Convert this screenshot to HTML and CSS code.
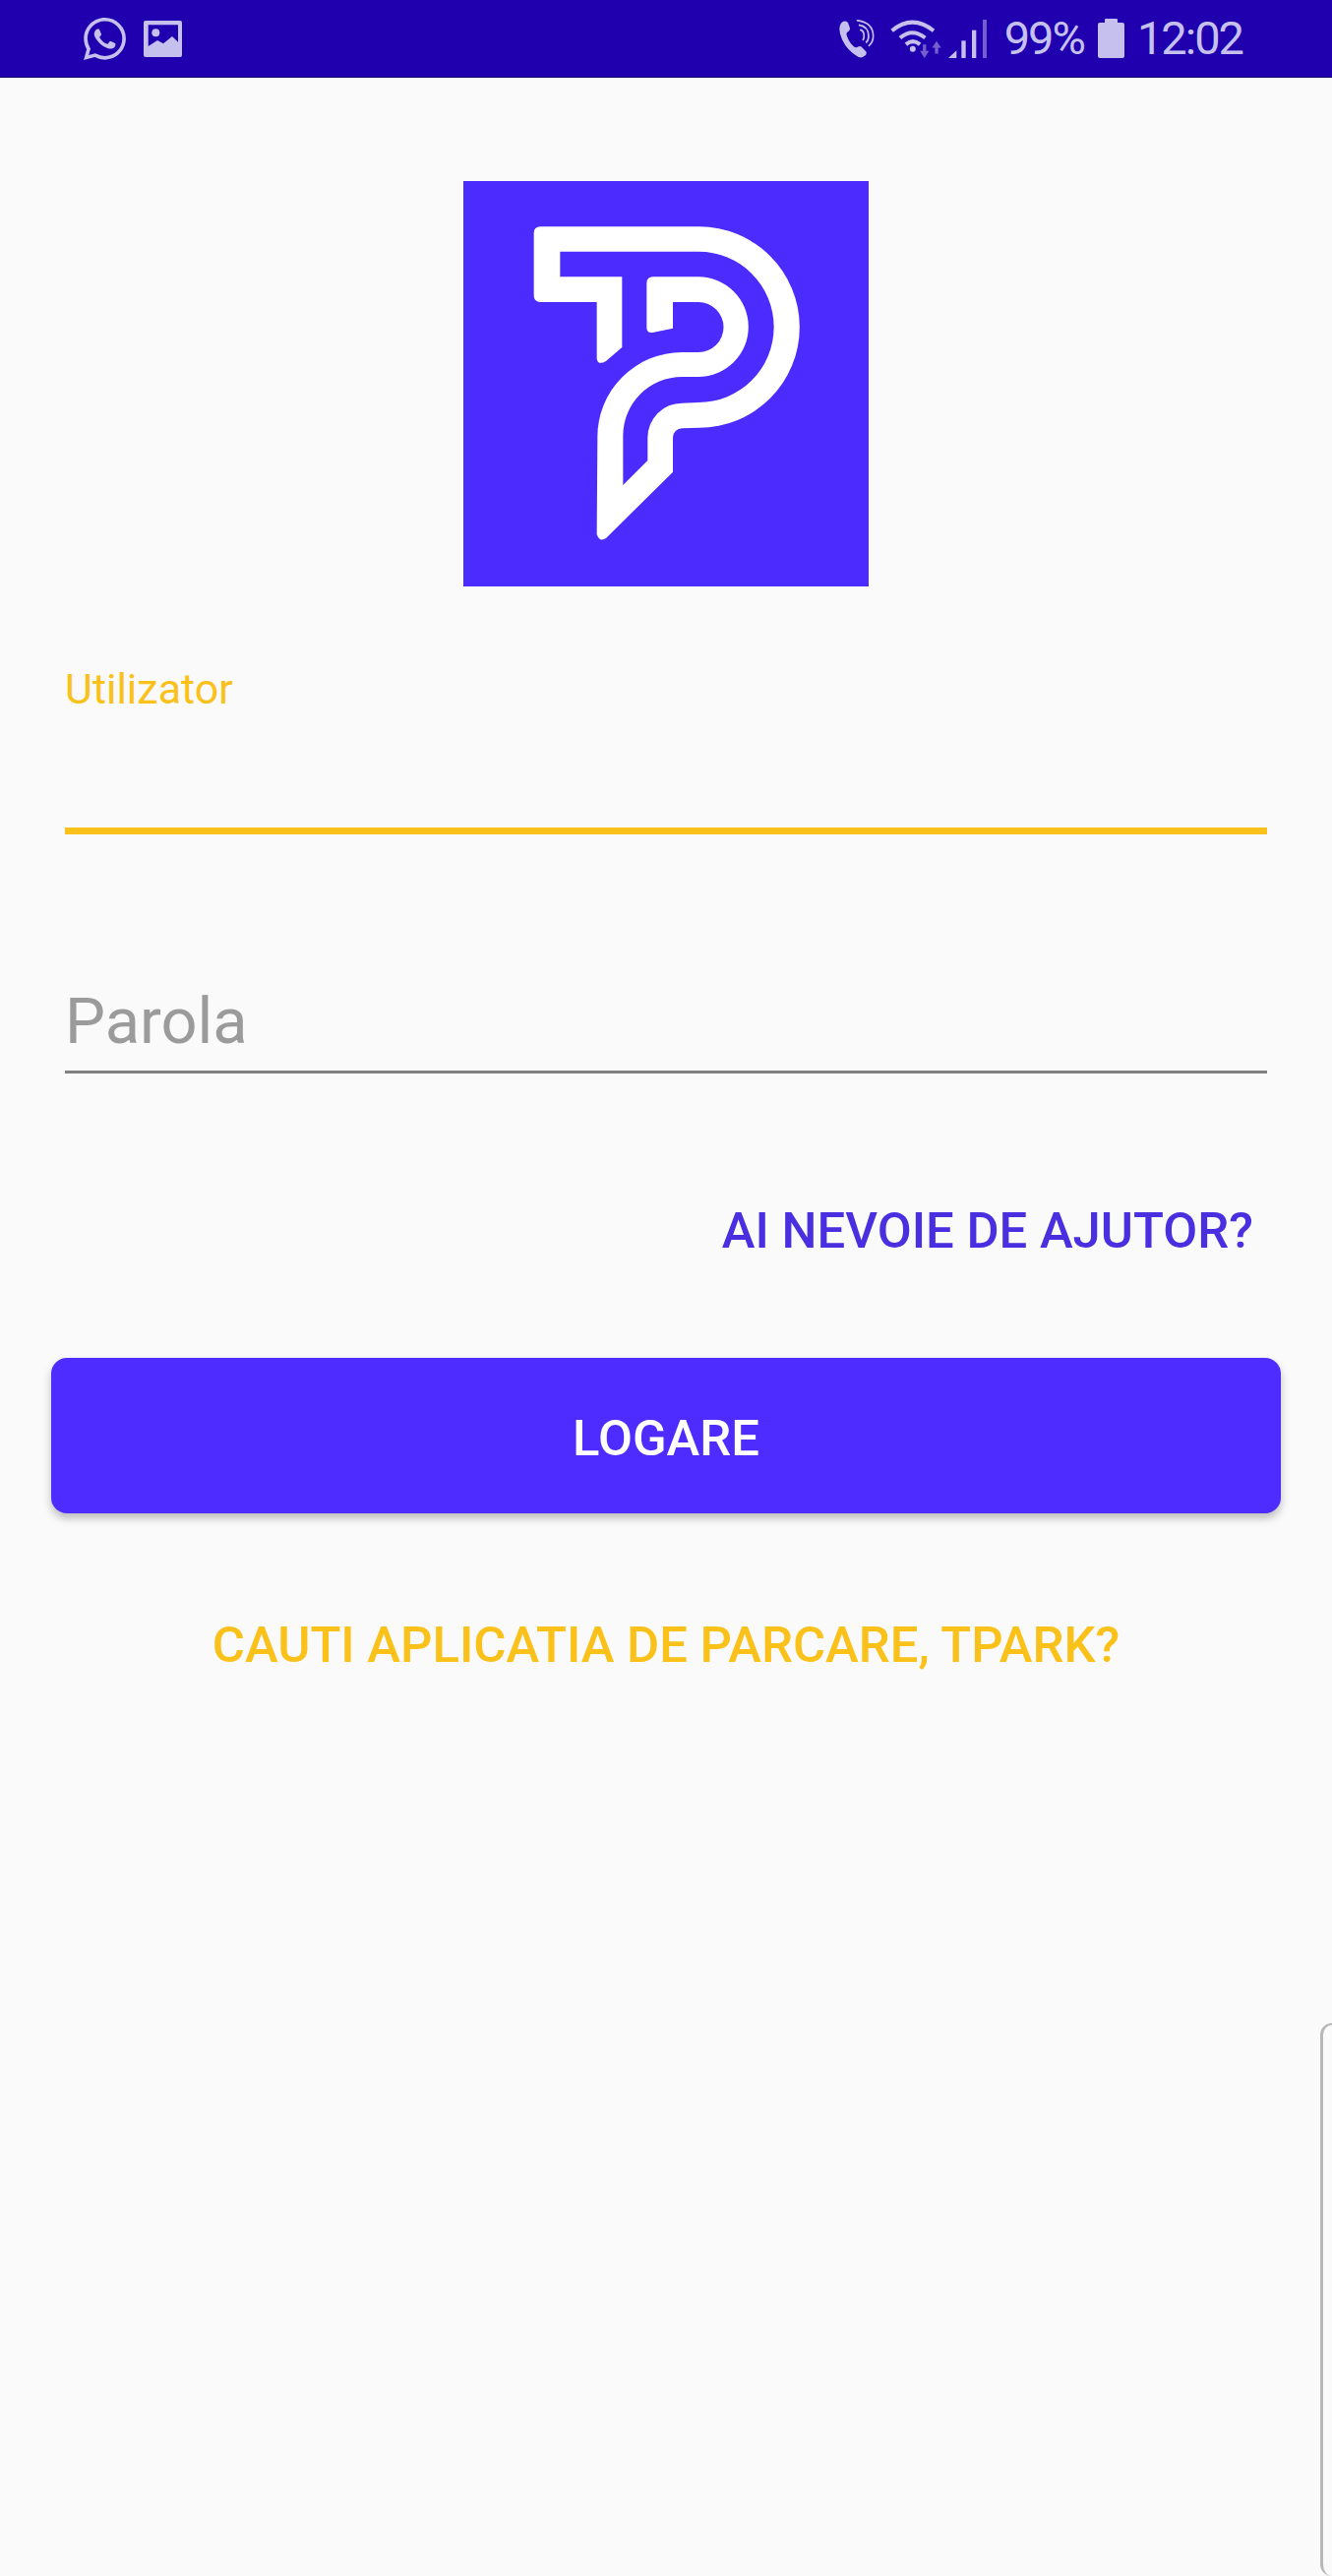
FILE: index.html
```html
<!DOCTYPE html>
<html lang="ro">
<head>
  <meta charset="UTF-8" />
  <meta name="viewport" content="width=device-width, initial-scale=1.0"/>
  <title>Logare</title>
  <link rel="stylesheet" href="styles.css">
</head>
<body>
  <div class="statusbar">
    <div class="status-left">
      <svg class="ic-whatsapp" viewBox="0 0 24 24"><path d="M17.472 14.382c-.297-.149-1.758-.867-2.03-.967-.273-.099-.471-.148-.67.15-.197.297-.767.966-.94 1.164-.173.199-.347.223-.644.075-.297-.15-1.255-.463-2.39-1.475-.883-.788-1.48-1.761-1.653-2.059-.173-.297-.018-.458.13-.606.134-.133.298-.347.446-.52.149-.174.198-.298.298-.497.099-.198.05-.371-.025-.52-.075-.149-.669-1.612-.916-2.207-.242-.579-.487-.5-.669-.51-.173-.008-.371-.01-.57-.01-.198 0-.52.074-.792.372-.272.297-1.04 1.016-1.04 2.479 0 1.462 1.065 2.875 1.213 3.074.149.198 2.096 3.2 5.077 4.487.709.306 1.262.489 1.694.625.712.227 1.36.195 1.871.118.571-.085 1.758-.719 2.006-1.413.248-.694.248-1.289.173-1.413-.074-.124-.272-.198-.57-.347m-5.421 7.403h-.004a9.87 9.87 0 01-5.031-1.378l-.361-.214-3.741.982.998-3.648-.235-.374a9.86 9.86 0 01-1.51-5.26c.001-5.45 4.436-9.884 9.888-9.884 2.64 0 5.122 1.03 6.988 2.898a9.825 9.825 0 012.893 6.994c-.003 5.45-4.437 9.884-9.885 9.884m8.413-18.297A11.815 11.815 0 0012.05 0C5.495 0 .16 5.335.157 11.892c0 2.096.547 4.142 1.588 5.945L.057 24l6.305-1.654a11.882 11.882 0 005.683 1.448h.005c6.554 0 11.89-5.335 11.893-11.893a11.821 11.821 0 00-3.48-8.413z"/></svg>
      <svg class="ic-image" viewBox="0 0 39 37"><path fill-rule="evenodd" d="M2 0h35a2 2 0 0 1 2 2v33a2 2 0 0 1-2 2H2a2 2 0 0 1-2-2V2a2 2 0 0 1 2-2zM4.700 4.300V26L14 20l6 3.300L29 16l6 5.700V4.300z"/><circle cx="12.300" cy="12.300" r="4"/></svg>
    </div>
    <div class="status-right">
      <svg class="ic-call" viewBox="25 28 110 116"><path d="M38 33Q48 30 52 38L58 55Q58 62 50 66Q46 68 48 76Q56 98 70 110Q76 114 82 110Q88 106 92 110L106 124Q110 130 104 136Q94 146 82 140Q50 122 34 88Q20 56 30 40Q33 35 38 33Z"/><g fill="none" stroke="currentColor" stroke-width="5"><path d="M78 30Q128 36 128 78Q128 96 114 108"/><path d="M84 44Q114 48 114 78Q114 92 106 98"/><path d="M88 58Q102 62 100 80Q100 86 96 90"/></g></svg>
      <svg class="ic-wifi" viewBox="180 22 160 122"><g fill="none" stroke="currentColor" stroke-width="12"><path d="M188 58Q250 6 316 58"/><path d="M213 80Q250 48 290 80"/><path d="M231 100Q252 82 274 100"/></g><circle cx="252" cy="114" r="9"/><g class="dim"><path d="M288 142L274 120H283V100H293V120H302Z"/><path d="M325 90L339 110H330V128H320V110H311Z"/></g></svg>
      <svg class="ic-signal" viewBox="365 28 117 117"><path d="M365 145L390 122V145Z"/><rect x="405" y="92" width="13" height="53"/><rect x="437" y="60" width="13" height="85"/><rect class="dim" x="470" y="28" width="12" height="117"/></svg>
      <span class="status-pct">99%</span>
      <svg class="ic-battery" viewBox="0 0 27 40"><path d="M2 4h5V1a1 1 0 0 1 1-1h11a1 1 0 0 1 1 1v3h5a2 2 0 0 1 2 2v32a2 2 0 0 1-2 2H2a2 2 0 0 1-2-2V6a2 2 0 0 1 2-2z"/></svg>
      <span class="status-time">12:02</span>
    </div>
  </div>

  <div class="logo">
    <svg viewBox="63 43 1236 1236">
      <rect x="63" y="43" width="1236" height="1236" fill="#4c2bff"/>
      <path fill="#ffffff" d="M298 182 L782 182 A306 306 0 0 1 782 795 L730 797 A28 28 0 0 0 702 825 L702 930 L498 1132 Q478 1145 470 1120 L472 825 A258 258 0 0 1 730 565 L780 565 A76.500 76.500 0 0 0 780 412 L702 412 L702 492 L640 505 Q622 507 622 490 L622 355 Q622 335 642 335 L780 335 A152.500 152.500 0 0 1 780 640 L730 640 A180 180 0 0 0 550 820 L550 970 L625 895 L625 825 A105 105 0 0 1 730 720 L780 718 A230 230 0 0 0 780 258 L358 258 L358 335 L547 335 L547 550 L498 592 Q474 606 470 585 L470 412 L298 412 Q278 412 278 392 L278 202 Q278 182 298 182 Z"/>
    </svg>
  </div>

  <div class="form">
    <div class="field field-active">
      <label class="field-label">Utilizator</label>
    </div>
    <div class="field field-empty">
      <label class="field-label">Parola</label>
    </div>
    <div class="help-row">
      <a class="link link-help">AI NEVOIE DE AJUTOR?</a>
    </div>
    <button class="btn-login">LOGARE</button>
    <div class="tpark-row">
      <a class="link link-tpark">CAUTI APLICATIA DE PARCARE, TPARK?</a>
    </div>
  </div>

  <div class="edge-handle"></div>
</body>
</html>
```

FILE: styles.css
```css
html, body {
  margin: 0;
  height: 2618px;
  overflow: hidden;
}

body {
  position: relative;
  background: #fafafa;
  font-family: Roboto, "Liberation Sans", sans-serif;
}

/* status bar */
.statusbar {
  height: 78px;
  background: #2000ae;
  border-bottom: 1px solid #14086a;
  display: flex;
  justify-content: space-between;
  align-items: center;
  color: #c6c0ef;
  fill: #c6c0ef;
}

.status-left {
  display: flex;
  align-items: center;
  gap: 18px;
  padding-left: 85px;
}

.status-right {
  display: flex;
  align-items: center;
  padding-right: 91px;
}

.statusbar svg {
  display: block;
}

.ic-whatsapp {
  width: 43px;
  height: 43px;
}

.ic-image {
  width: 39px;
  height: 37px;
}

.ic-call {
  width: 37px;
  height: 39px;
  margin-right: 14px;
}

.ic-wifi {
  width: 53px;
  height: 41px;
  margin-right: 7px;
}

.ic-signal {
  width: 39px;
  height: 39px;
  margin-right: 18px;
}

.dim {
  opacity: 0.5;
}

.status-pct,
.status-time {
  font-size: 47px;
  line-height: 78px;
  letter-spacing: -2px;
}

.ic-battery {
  width: 27px;
  height: 40px;
  margin: 0 13px 0 14px;
}

/* logo */
.logo {
  width: 412px;
  height: 412px;
  margin: 105px auto 0;
}

.logo svg {
  display: block;
  width: 100%;
  height: 100%;
}

/* form */
.form {
  padding: 0 52px;
}

.field {
  margin: 0 14px;
}

.field-label {
  display: block;
}

.field-active {
  height: 171px;
  margin-top: 81px;
  box-sizing: border-box;
  border-bottom: 7px solid #fbc11b;
}

.field-active .field-label {
  font-size: 43px;
  line-height: 47px;
  color: #fbc11b;
}

.field-empty {
  height: 243px;
  box-sizing: border-box;
  border-bottom: 3px solid #808080;
  padding-top: 154px;
}

.field-empty .field-label {
  font-size: 65px;
  line-height: 72px;
  color: #9b9b9b;
}

.help-row {
  display: flex;
  justify-content: flex-end;
  padding-right: 28px;
  margin-top: 132px;
}

.link {
  font-weight: 500;
  font-size: 50.800px;
  line-height: 56px;
}

.link-help {
  color: #4a2fe0;
}

.btn-login {
  display: block;
  width: 100%;
  height: 158px;
  margin-top: 101px;
  padding-top: 6px;
  border: none;
  border-radius: 16px;
  background: #4e2cff;
  color: #ffffff;
  font-family: inherit;
  font-size: 50.800px;
  font-weight: 500;
  box-shadow: 0 5px 8px rgba(0, 0, 0, 0.25);
}

.tpark-row {
  text-align: center;
  margin-top: 106px;
}

.link-tpark {
  color: #fbc11b;
}

/* edge panel handle on the right side */
.edge-handle {
  position: absolute;
  left: 1342px;
  top: 2056px;
  right: 0;
  bottom: 0;
  border-left: 3px solid #b8b8b8;
  border-top: 2px solid #b8b8b8;
  border-radius: 20px 0 0 20px;
}
```
